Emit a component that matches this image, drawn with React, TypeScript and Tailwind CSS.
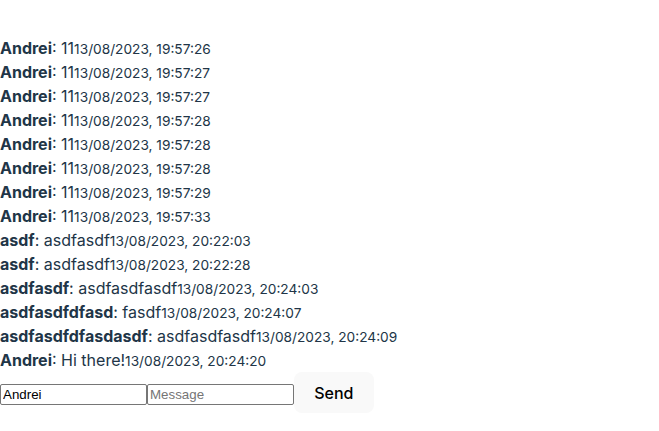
import { useState } from 'react';

interface Message {
  user: string;
  text: string;
  time: string;
}

const messages: Message[] = [
  { user: 'Andrei', text: '11', time: '13/08/2023, 19:57:26' },
  { user: 'Andrei', text: '11', time: '13/08/2023, 19:57:27' },
  { user: 'Andrei', text: '11', time: '13/08/2023, 19:57:27' },
  { user: 'Andrei', text: '11', time: '13/08/2023, 19:57:28' },
  { user: 'Andrei', text: '11', time: '13/08/2023, 19:57:28' },
  { user: 'Andrei', text: '11', time: '13/08/2023, 19:57:28' },
  { user: 'Andrei', text: '11', time: '13/08/2023, 19:57:29' },
  { user: 'Andrei', text: '11', time: '13/08/2023, 19:57:33' },
  { user: 'asdf', text: 'asdfasdf', time: '13/08/2023, 20:22:03' },
  { user: 'asdf', text: 'asdfasdf', time: '13/08/2023, 20:22:28' },
  { user: 'asdfasdf', text: 'asdfasdfasdf', time: '13/08/2023, 20:24:03' },
  { user: 'asdfasdfdfasd', text: 'fasdf', time: '13/08/2023, 20:24:07' },
  { user: 'asdfasdfdfasdasdf', text: 'asdfasdfasdf', time: '13/08/2023, 20:24:09' },
  { user: 'Andrei', text: 'Hi there!', time: '13/08/2023, 20:24:20' },
];

export default function App() {
  const [name, setName] = useState('Andrei');
  const [message, setMessage] = useState('');

  return (
    <div className="min-h-screen bg-white pt-[36px] font-['Inter',sans-serif] text-base leading-6 text-[#213547]">
      {/* Message list */}
      <div>
        {messages.map((m, i) => (
          <div key={i} className="h-6">
            <strong className="font-bold">{m.user}</strong>: {m.text}
            <small className="text-[13.7px] leading-none">{m.time}</small>
          </div>
        ))}
      </div>

      {/* Composer */}
      <form className="flex items-baseline" onSubmit={(e) => e.preventDefault()}>
        <input
          value={name}
          onChange={(e) => setName(e.target.value)}
          className="h-[21px] w-[147px] rounded-[2px] border border-[#767676] bg-white px-[2px] py-[1px] font-['Liberation_Sans',Arial,sans-serif] text-[13.333px] leading-[normal] text-black"
        />
        <input
          value={message}
          onChange={(e) => setMessage(e.target.value)}
          placeholder="Message"
          className="h-[21px] w-[147px] rounded-[2px] border border-[#767676] bg-white px-[2px] py-[1px] font-['Liberation_Sans',Arial,sans-serif] text-[13.333px] leading-[normal] text-black placeholder:text-[#757575]"
        />
        <button
          type="submit"
          className="rounded-lg border border-transparent bg-[#f9f9f9] px-[19.2px] py-[9.6px] text-base font-medium leading-[normal] text-black"
        >
          Send
        </button>
      </form>
    </div>
  );
}
